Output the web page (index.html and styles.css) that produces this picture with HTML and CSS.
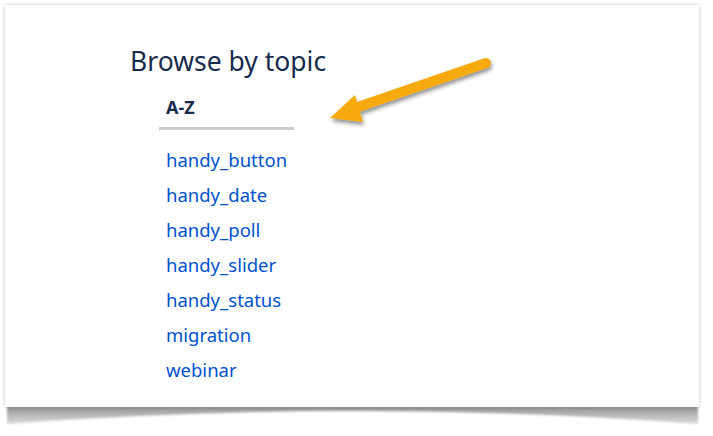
FILE: index.html
```html
<!DOCTYPE html>
<html>
<head>
<meta charset="utf-8">
<link rel="stylesheet" href="styles.css">
</head>
<body>
<div class="frame">
  <div class="card">
    <h1 class="title">Browse by topic</h1>
    <div class="tabs">
      <div class="tab">A-Z</div>
    </div>
    <ul class="topics">
      <li><a href="#">handy_button</a></li>
      <li><a href="#">handy_date</a></li>
      <li><a href="#">handy_poll</a></li>
      <li><a href="#">handy_slider</a></li>
      <li><a href="#">handy_status</a></li>
      <li><a href="#">migration</a></li>
      <li><a href="#">webinar</a></li>
    </ul>
    <svg class="arrow" width="200" height="90" viewBox="0 0 200 90">
      <defs>
        <filter id="ash" x="-20%" y="-20%" width="140%" height="160%">
          <feGaussianBlur in="SourceAlpha" stdDeviation="2"/>
          <feOffset dx="1" dy="3"/>
          <feComponentTransfer><feFuncA type="linear" slope="0.45"/></feComponentTransfer>
          <feMerge><feMergeNode/><feMergeNode in="SourceGraphic"/></feMerge>
        </filter>
      </defs>
      <g filter="url(#ash)">
        <line x1="176" y1="13" x2="45" y2="58" stroke="#F6AA0C" stroke-width="10" stroke-linecap="round"/>
        <polygon points="20,68 45,45 53,72" fill="#F6AA0C"/>
      </g>
    </svg>
  </div>
  <svg class="curl" width="713" height="30" viewBox="0 0 713 30">
    <defs>
      <linearGradient id="cg" x1="0" y1="0" x2="0" y2="1">
        <stop offset="0" stop-color="#8c8c8c"/>
        <stop offset="0.5" stop-color="#b8b8b8"/>
        <stop offset="1" stop-color="#dcdcdc"/>
      </linearGradient>
      <filter id="cb"><feGaussianBlur stdDeviation="1.2"/></filter>
    </defs>
    <path d="M7,0 L698,0 L698,18 Q352,-8 7,18 Z" fill="url(#cg)" filter="url(#cb)"/>
  </svg>
</div>
</body>
</html>
```

FILE: styles.css
```css
html, body {
  margin: 0;
  padding: 0;
  background: #ffffff;
}
body {
  font-family: "Noto Sans", "Open Sans", sans-serif;
  color: #172B4D;
}
.frame {
  position: relative;
  width: 713px;
  height: 436px;
  padding: 5px 14px 0 5px;
  box-sizing: border-box;
}
.card {
  position: relative;
  z-index: 1;
  background: #fff;
  height: 402px;
  box-shadow: 0 0 3px rgba(0,0,0,0.28);
  padding: 0 0 0 125px;
  box-sizing: border-box;
  display: flex;
  flex-direction: column;
}
.title {
  margin: 39px 0 0 0;
  font-size: 26.5px;
  font-weight: 400;
  line-height: 34px;
  color: #172B4D;
}
.tabs {
  margin: 17px 0 0 29px;
  width: 135px;
  border-bottom: 3px solid #cccccc;
}
.tab {
  padding: 0 0 8px 7px;
  font-size: 18px;
  font-weight: 700;
  line-height: 24px;
  color: #172B4D;
}
.topics {
  list-style: none;
  margin: 12px 0 0 36px;
  padding: 0;
  display: flex;
  flex-direction: column;
}
.topics li {
  height: 35px;
  line-height: 35px;
  font-size: 18.5px;
}
.topics a {
  color: #0052CC;
  text-decoration: none;
}
.arrow {
  position: absolute;
  left: 305px;
  top: 45px;
}
.curl {
  position: absolute;
  left: 0;
  top: 406px;
  z-index: 0;
}
```
